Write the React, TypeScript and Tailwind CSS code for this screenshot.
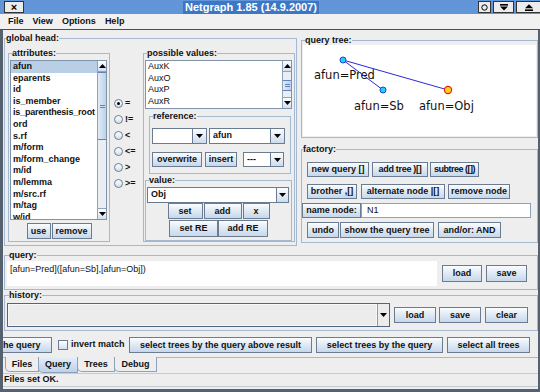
import React from "react";

type P = { className?: string; children?: React.ReactNode };

const BTN =
  "flex items-center justify-center whitespace-nowrap border border-[#6b7c91] bg-[linear-gradient(to_bottom,#fbfdff_0%,#e6eef7_35%,#c6d8eb_100%)] text-[9px] font-bold leading-none text-[#111]";

function Btn({ className = "", children }: P) {
  return <div className={`${BTN} ${className}`}>{children}</div>;
}

function Group({
  title,
  className = "",
  legendClass = "ml-[3px]",
  children,
}: P & { title: string; legendClass?: string }) {
  return (
    <fieldset className={`min-w-0 border border-[#a4b9cf] ${className}`}>
      <legend className={`px-0 text-[9px] font-bold leading-[10px] text-[#111] ${legendClass}`}>{title}</legend>
      {children}
    </fieldset>
  );
}

function DownTri() {
  return (
    <svg width="7" height="4" viewBox="0 0 7 4" className="block">
      <path d="M0 0H7L3.5 4Z" fill="#000" />
    </svg>
  );
}

function UpTri() {
  return (
    <svg width="7" height="4" viewBox="0 0 7 4" className="block">
      <path d="M0 4H7L3.5 0Z" fill="#000" />
    </svg>
  );
}

const ARROW =
  "flex h-[11px] items-center justify-center border-[#8ea2b8] bg-[linear-gradient(to_bottom,#fdfeff,#d3e0ee)]";

function VScroll({ gap, thumb }: { gap: string; thumb: string }) {
  return (
    <div className="flex w-[9px] flex-col border-l border-[#8ea2b8] bg-[#e9eef4]">
      <div className={`${ARROW} border-b`}>
        <UpTri />
      </div>
      <div className={gap} />
      <div
        className={`flex flex-col items-center justify-center gap-[1px] border-y border-[#6382bf] bg-[linear-gradient(to_right,#e2ebf6,#bdd1e8)] ${thumb}`}
      >
        <div className="h-px w-[5px] bg-[#6382bf]" />
        <div className="h-px w-[5px] bg-[#6382bf]" />
      </div>
      <div className="flex-1" />
      <div className={`${ARROW} border-t`}>
        <DownTri />
      </div>
    </div>
  );
}

function Combo({
  className = "",
  text = "",
  arrowW = "w-[14px]",
}: {
  className?: string;
  text?: string;
  arrowW?: string;
}) {
  return (
    <div className={`flex border border-[#6b7c91] bg-white ${className}`}>
      <div className="flex flex-1 items-center pl-[3px] text-[9px] font-bold">{text}</div>
      <div
        className={`flex items-center justify-center border-l border-[#6b7c91] bg-[linear-gradient(to_bottom,#fbfdff,#cddcec)] ${arrowW}`}
      >
        <DownTri />
      </div>
    </div>
  );
}

function Radio({ label, on = false }: { label: string; on?: boolean }) {
  return (
    <div className="flex h-[16px] items-center">
      <div className="flex h-[9px] w-[9px] items-center justify-center rounded-full border border-[#6b7c91] bg-[linear-gradient(to_bottom,#ffffff,#d3dfec)]">
        {on && <div className="h-[3px] w-[3px] rounded-full bg-black" />}
      </div>
      <span className="ml-[2px] text-[9px] font-bold leading-none">{label}</span>
    </div>
  );
}

function TitleBar() {
  return (
    <div className="flex h-[14px] items-center bg-[#3b77c6] bg-[image:radial-gradient(circle,#79a6e2_0.6px,transparent_0.9px)] bg-[length:2px_2px]">
      <div className="ml-[4px] flex h-[12px] w-[20px] items-center justify-center border border-[#333] bg-[#ebebeb] text-[11px] font-bold leading-none text-black">
        ×
      </div>
      <div className="flex flex-1 justify-center">
        <span className="bg-[#3b77c6] px-[2px] text-[11px] font-bold leading-[13px] text-white">
          Netgraph 1.85 (14.9.2007)
        </span>
      </div>
      <div className="flex h-[12px] w-[13px] items-center justify-center border border-[#333] bg-[#ececec]">
        <svg width="7" height="7" viewBox="0 0 7 7" className="block">
          <circle cx="3.5" cy="3.5" r="2.7" fill="none" stroke="#000" strokeWidth="1" />
        </svg>
      </div>
      <div className="ml-[2px] flex h-[12px] w-[21px] items-center justify-center border border-[#333] bg-[#ececec]">
        <svg width="8" height="7" viewBox="0 0 8 7" className="block">
          <rect x="0" y="0" width="8" height="1.6" fill="#000" />
          <path d="M0 2.6H8L4 6.5Z" fill="#000" />
        </svg>
      </div>
      <div className="ml-[2px] flex h-[12px] w-[24px] items-center justify-center border border-r-0 border-[#333] bg-[#ececec]">
        <svg width="8" height="7" viewBox="0 0 8 7" className="block">
          <path d="M0 4.2H8L4 0.3Z" fill="#000" />
          <rect x="0" y="5.4" width="8" height="1.6" fill="#000" />
        </svg>
      </div>
    </div>
  );
}

function MenuBar() {
  return (
    <div className="flex h-[16px] items-center gap-[9px] border-b border-[#4f4f4f] bg-[#f1f1f1] pl-[8px] text-[9px] font-bold">
      <span>File</span>
      <span>View</span>
      <span>Options</span>
      <span>Help</span>
    </div>
  );
}

const ATTRS = [
  "afun",
  "eparents",
  "id",
  "is_member",
  "is_parenthesis_root",
  "ord",
  "s.rf",
  "m/form",
  "m/form_change",
  "m/id",
  "m/lemma",
  "m/src.rf",
  "m/tag",
  "w/id",
];

const VALUES = ["AuxK", "AuxO", "AuxP", "AuxR", "AuxT"];

function GlobalHead() {
  return (
    <Group title="global head:" className="ml-[1px] h-[213px] w-[293px]" legendClass="ml-[1px]">
      <div className="flex pl-[3px]">
        {/* attributes */}
        <Group title="attributes:" className="mt-[5px] h-[194px] w-[102px]" legendClass="ml-[3px]">
          <div className="ml-[1px] mt-[2px] flex h-[160px] w-[97px] border border-[#7f93aa] bg-white">
            <div className="flex-1 overflow-hidden">
              {ATTRS.map((a, i) => (
                <div
                  key={a}
                  className={`h-[11.6px] whitespace-nowrap pl-[2px] text-[9px] font-bold leading-[11.6px] ${
                    i === 0 ? "bg-[#b8cfe5]" : ""
                  } ${i === 4 ? "tracking-[-0.2px]" : ""}`}
                >
                  {a}
                </div>
              ))}
            </div>
            <VScroll gap="h-0" thumb="h-[68px]" />
          </div>
          <div className="mt-[3px] flex justify-center gap-[1px]">
            <Btn className="h-[16px] w-[24px]">use</Btn>
            <Btn className="h-[16px] w-[40px]">remove</Btn>
          </div>
        </Group>

        {/* radios */}
        <div className="w-[33px] pl-[4px] pt-[52px]">
          <Radio label="=" on />
          <Radio label="!=" />
          <Radio label="<" />
          <Radio label="<=" />
          <Radio label=">" />
          <Radio label=">=" />
        </div>

        {/* possible values */}
        <Group title="possible values:" className="mt-[5px] h-[194px] w-[152px]" legendClass="ml-[3px]">
          <div className="ml-[1px] mt-[2px] flex h-[49px] w-[147px] border border-[#7f93aa] bg-white">
            <div className="flex-1 overflow-hidden">
              {VALUES.map((v) => (
                <div key={v} className="h-[11.6px] whitespace-nowrap pl-[2px] text-[9px] leading-[11.6px]">
                  {v}
                </div>
              ))}
            </div>
            <VScroll gap="h-[8px]" thumb="h-[11px]" />
          </div>

          <Group title="reference:" className="ml-[5px] mt-[2px] h-[63px] w-[142px]" legendClass="ml-[3px]">
            <div className="mt-[7px] flex gap-[2px] pl-[2px]">
              <Combo className="h-[16px] w-[55px]" />
              <Combo className="h-[16px] w-[76px]" text="afun" />
            </div>
            <div className="mt-[8px] flex pl-[2px]">
              <Btn className="h-[15px] w-[50px]">overwrite</Btn>
              <Btn className="ml-[3px] h-[15px] w-[32px]">insert</Btn>
              <Combo className="ml-[6px] h-[15px] w-[41px]" text="---" arrowW="w-[13px]" />
            </div>
          </Group>

          <Group title="value:" className="ml-[1px] mt-[1px] h-[66px] w-[147px]" legendClass="ml-[3px]">
            <Combo className="ml-[1px] mt-[2px] h-[16px] w-[142px]" text="Obj" arrowW="w-[12px]" />
            <div className="flex justify-center gap-[1px]">
              <Btn className="h-[16px] w-[35px]">set</Btn>
              <Btn className="h-[16px] w-[38px]">add</Btn>
              <Btn className="h-[16px] w-[27px]">x</Btn>
            </div>
            <div className="mt-[1px] flex justify-center">
              <Btn className="h-[17px] w-[49px]">set RE</Btn>
              <Btn className="h-[17px] w-[50px]">add RE</Btn>
            </div>
          </Group>
        </Group>
      </div>
    </Group>
  );
}

function QueryTree() {
  const f = "DejaVu Sans, Verdana, sans-serif";
  return (
    <svg width="233" height="91" viewBox="0 0 233 91" className="block">
      <text x="11" y="34" fontFamily={f} fontSize="11.5" fill="#111">
        afun=Pred
      </text>
      <text x="51" y="65" fontFamily={f} fontSize="11.5" fill="#111">
        afun=Sb
      </text>
      <text x="116" y="65" fontFamily={f} fontSize="11.5" fill="#111">
        afun=Obj
      </text>
      <line x1="40" y1="15" x2="80" y2="45" stroke="#2a2ad8" strokeWidth="1" />
      <line x1="40" y1="15" x2="145" y2="45" stroke="#2a2ad8" strokeWidth="1" />
      <circle cx="40" cy="15" r="3" fill="#1ad4f6" stroke="#2a3fd1" strokeWidth="1" />
      <circle cx="80" cy="45" r="3" fill="#1ad4f6" stroke="#2a3fd1" strokeWidth="1" />
      <circle cx="145" cy="45" r="3.6" fill="#ffd21a" stroke="#e8201a" strokeWidth="1.2" />
    </svg>
  );
}

function RightCol() {
  return (
    <div className="ml-[4px] mt-[2px] flex w-[237px] flex-col">
      <Group title="query tree:" className="h-[103px] w-[237px]" legendClass="ml-[3px]">
        <div className="ml-[1px] h-[91px] w-[233px] bg-white">
          <QueryTree />
        </div>
      </Group>
      <Group title="factory:" className="mt-[6px] h-[99px] w-[237px]" legendClass="ml-[1px]">
        <div className="mt-[8px] flex pl-[5px]">
          <Btn className="h-[15px] w-[62px]">new query []</Btn>
          <Btn className="ml-[3px] h-[15px] w-[56px] tracking-[-0.3px]">add tree )[]</Btn>
          <Btn className="ml-[2px] h-[15px] w-[49px] tracking-[-0.5px]">subtree ([])</Btn>
        </div>
        <div className="mt-[7px] flex pl-[5px]">
          <Btn className="h-[15px] w-[50px]">brother ,[]</Btn>
          <Btn className="ml-[4px] h-[15px] w-[84px]">alternate node |[]</Btn>
          <Btn className="ml-[3px] h-[15px] w-[62px]">remove node</Btn>
        </div>
        <div className="mt-[4px] flex">
          <Btn className="h-[15px] w-[59px]">name node:</Btn>
          <div className="flex h-[15px] w-[170px] items-center border border-[#8da2b8] bg-white pl-[5px] text-[9px]">
            N1
          </div>
        </div>
        <div className="mt-[4px] flex pl-[5px]">
          <Btn className="h-[16px] w-[32px]">undo</Btn>
          <Btn className="ml-[1px] h-[16px] w-[94px]">show the query tree</Btn>
          <Btn className="ml-[4px] h-[16px] w-[63px]">and/or: AND</Btn>
        </div>
      </Group>
    </div>
  );
}

function QueryBox() {
  return (
    <Group title="query:" className="ml-[1px] mt-[4px] h-[40px] w-[534px]" legendClass="ml-[4px]">
      <div className="mt-[1px] flex items-center">
        <div className="ml-[2px] h-[25px] w-[430px] bg-white pl-[3px] pt-[3px] text-[9px] leading-[10px]">
          [afun=Pred]([afun=Sb],[afun=Obj])
        </div>
        <Btn className="ml-[5px] h-[17px] w-[40px]">load</Btn>
        <Btn className="ml-[4px] h-[17px] w-[41px]">save</Btn>
      </div>
    </Group>
  );
}

function HistoryBox() {
  return (
    <Group title="history:" className="ml-[1px] h-[41px] w-[534px]" legendClass="ml-[4px]">
      <div className="mt-[3px] flex items-center">
        <div className="ml-[2px] flex h-[24px] w-[383px] border border-[#52657d] bg-[#ececec]">
          <div className="flex-1 border border-[#f8f8f8]" />
          <div className="flex w-[12px] items-center justify-center border-l border-[#8a9bb0]">
            <DownTri />
          </div>
        </div>
        <Btn className="ml-[4px] h-[16px] w-[42px]">load</Btn>
        <Btn className="ml-[3px] h-[16px] w-[42px]">save</Btn>
        <Btn className="ml-[4px] h-[16px] w-[43px]">clear</Btn>
      </div>
    </Group>
  );
}

function BottomButtons() {
  return (
    <div className="mt-[6px] flex h-[16px] items-center">
      <Btn className="h-[16px] w-[49px] justify-start border-l-0">he query</Btn>
      <div className="ml-[6px] h-[10px] w-[10px] border border-[#6b7c91] bg-[linear-gradient(to_bottom,#ffffff,#d3dfec)]" />
      <span className="ml-[3px] w-[58px] whitespace-nowrap text-[9px] font-bold">invert match</span>
      <Btn className="h-[16px] w-[183px]">select trees by the query above result</Btn>
      <Btn className="ml-[4px] h-[16px] w-[127px]">select trees by the query</Btn>
      <Btn className="ml-[4px] h-[16px] w-[83px]">select all trees</Btn>
    </div>
  );
}

function Tabs() {
  const base =
    "flex h-[15px] items-center justify-center rounded-bl-[5px] border-x border-b border-[#8ea3bb] text-[9px] font-bold leading-none";
  return (
    <div className="mt-[4px] flex h-[15px] border-t border-[#a4b9cf] pl-[2px]">
      <div className={`${base} -mt-px h-[15px] w-[34px] bg-[#eeeeee]`}>Files</div>
      <div className={`${base} -ml-px -mt-px h-[16px] w-[40px] bg-[linear-gradient(to_bottom,#e6eef8,#bcd1e8)]`}>
        Query
      </div>
      <div className={`${base} -ml-px -mt-px w-[38px] bg-[#eeeeee]`}>Trees</div>
      <div className={`${base} -ml-px -mt-px w-[43px] bg-[#eeeeee]`}>Debug</div>
    </div>
  );
}

function Status() {
  return (
    <div className="mt-[1px] flex h-[14px] items-center border-y border-[#c4cbd3] pl-[1px] text-[9px] font-bold">
      Files set OK.
    </div>
  );
}

export default function App() {
  return (
    <div className="flex h-[392px] w-[540px] flex-col overflow-hidden bg-[#eeeeee] font-['Liberation_Sans',Arial,sans-serif] text-[#111]">
      <TitleBar />
      <MenuBar />
      <div className="flex min-h-0 flex-1 flex-col border-b-[3px] border-l-[3px] border-r-2 border-[#56616f] pt-[3px]">
        <div className="flex h-[213px] items-start">
          <GlobalHead />
          <RightCol />
        </div>
        <QueryBox />
        <HistoryBox />
        <BottomButtons />
        <Tabs />
        <Status />
      </div>
    </div>
  );
}
